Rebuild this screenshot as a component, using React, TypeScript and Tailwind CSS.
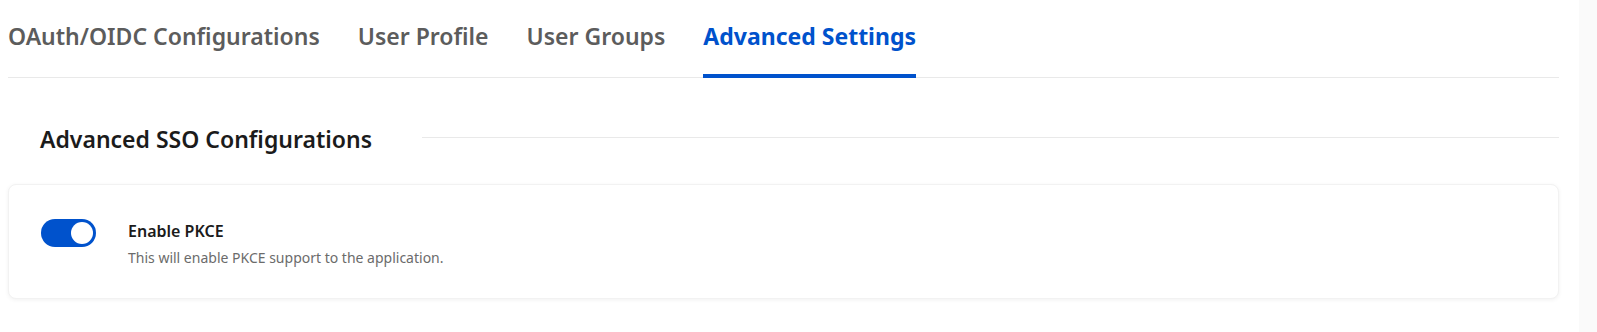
import React, { useState } from 'react';

const TABS = ['OAuth/OIDC Configurations', 'User Profile', 'User Groups', 'Advanced Settings'];

export default function App() {
  const [active, setActive] = useState('Advanced Settings');
  const [pkce, setPkce] = useState(true);

  return (
    <div className="flex min-h-[332px] bg-white" style={{ fontFamily: '"Noto Sans", "Open Sans", sans-serif' }}>
      <div className="flex-1 pl-2 pr-5">
        {/* Tabs */}
        <nav className="flex gap-[38px] pt-5 border-b border-[#e9e9e9]">
          {TABS.map(tab => (
            <button
              key={tab}
              onClick={() => setActive(tab)}
              className={cn(
                'text-[23px] leading-8 pb-[22px] border-b-4 -mb-px whitespace-nowrap',
                active === tab
                  ? 'font-bold text-[#0052cc] border-[#0052cc]'
                  : 'font-semibold text-[#5c5c5c] border-transparent'
              )}
            >
              {tab}
            </button>
          ))}
        </nav>

        {/* Section heading */}
        <div className="flex items-center gap-[50px] pl-8 mt-[45px]">
          <h2 className="text-[23px] leading-8 font-semibold text-[#1b1b1b] whitespace-nowrap">Advanced SSO Configurations</h2>
          <div className="flex-1 h-px bg-[#e9e9e9] -mt-1" />
        </div>

        {/* Card */}
        <div className="mt-[29px] rounded-lg border border-[#f2f2f2] bg-white shadow-[0_1px_4px_rgba(0,0,0,0.06)] pl-8 pt-[34px] pb-[30px] flex gap-8">
          <button
            onClick={() => setPkce(!pkce)}
            className={cn(
              'w-[55px] h-[28px] rounded-full flex items-center px-[3px] shrink-0',
              pkce ? 'bg-[#0052cc] justify-end' : 'bg-[#c1c7d0] justify-start'
            )}
          >
            <span className="w-[22px] h-[22px] rounded-full bg-white" />
          </button>
          <div>
            <div className="text-[16px] leading-6 font-semibold text-[#1b1b1b]">Enable PKCE</div>
            <div className="mt-[5px] text-[14px] leading-5 text-[#6b6b6b]">This will enable PKCE support to the application.</div>
          </div>
        </div>
      </div>
      <div className="w-[18px] bg-[#fafafa]" />
    </div>
  );
}

function cn(...inputs: any[]) {
  return inputs.filter(Boolean).join(' ');
}
